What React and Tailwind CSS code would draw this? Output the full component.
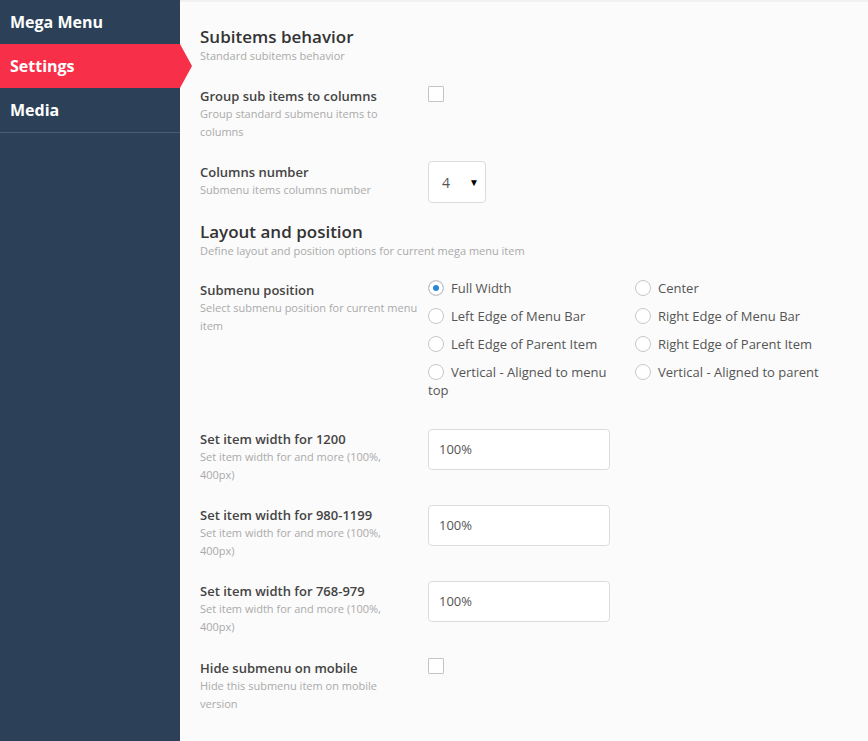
import React from 'react';

const font = { fontFamily: '"Open Sans", "Liberation Sans", sans-serif' };

function Checkbox() {
  return <span className="block w-[16px] h-[16px] bg-white border border-[#c4c4c4] rounded-[1px]" />;
}

function Radio({ label, checked }) {
  return (
    <label className="block text-[13px] leading-[18px] text-[#555]">
      <span
        className={
          'inline-block align-[-3px] w-[16px] h-[16px] mr-[7px] rounded-full border ' +
          (checked
            ? 'border-[#d9c8c0] bg-[#2f86d4] shadow-[inset_0_0_0_4px_#fff]'
            : 'border-[#c8c8c8] bg-white')
        }
      />
      {label}
    </label>
  );
}

function Label({ title, desc, className = 'w-[218px]' }) {
  return (
    <div className={'shrink-0 ' + className}>
      <div className="text-[13px] leading-[18px] font-semibold text-[#444]">{title}</div>
      <div className="text-[11px] leading-[18px] text-[#aaa]">{desc}</div>
    </div>
  );
}

function WidthInput() {
  return (
    <div className="w-[182px] h-[41px] bg-white border border-[#dcdcdc] rounded-[4px] px-[10px] flex items-center text-[13px] text-[#555]">
      100%
    </div>
  );
}

export default function App() {
  return (
    <div className="h-screen flex bg-[#fbfbfb]" style={font}>
      {/* Sidebar */}
      <div className="w-[180px] shrink-0 bg-[#2c4158]">
        <div className="h-[44px] flex items-center pl-[10px] text-white font-bold text-[16px]">Mega Menu</div>
        <div className="relative h-[44px] flex items-center pl-[10px] text-white font-bold text-[16px] bg-[#f72f49]">
          Settings
          <span className="absolute left-full top-0 w-0 h-0 border-y-[22px] border-y-transparent border-l-[12px] border-l-[#f72f49]" />
        </div>
        <div className="h-[45px] flex items-center pl-[10px] text-white font-bold text-[16px] border-b border-[#4a5e73]">Media</div>
      </div>

      {/* Content */}
      <div className="flex-1 border-t-2 border-[#f1f1f1] pl-[20px] pr-4">
        <div className="mt-[23px] text-[17px] leading-[24px] font-semibold text-[#333]">Subitems behavior</div>
        <div className="text-[11px] leading-[14px] text-[#aaa]">Standard subitems behavior</div>

        <div className="mt-[23px] flex gap-[10px]">
          <Label title="Group sub items to columns" desc="Group standard submenu items to columns" className="w-[218px] mt-px" />
          <Checkbox />
        </div>

        <div className="mt-[20px] flex gap-[10px]">
          <Label title="Columns number" desc="Submenu items columns number" className="w-[218px] mt-[2px]" />
          <div className="w-[58px] h-[42px] bg-white border border-[#dcdcdc] rounded-[4px] flex items-center pl-[13px] pr-[6px] text-[14px] text-[#555]">
            <span className="flex-1">4</span>
            <span className="text-[10px] text-black">▼</span>
          </div>
        </div>

        <div className="mt-[17px] text-[17px] leading-[24px] font-semibold text-[#333]">Layout and position</div>
        <div className="text-[11px] leading-[14px] text-[#aaa]">Define layout and position options for current mega menu item</div>

        <div className="mt-[21px] flex gap-[10px]">
          <Label title="Submenu position" desc="Select submenu position for current menu item" className="w-[218px] mt-[2px]" />
          <div className="grid grid-cols-[207px_200px] gap-y-[10px]">
            <Radio label="Full Width" checked />
            <Radio label="Center" />
            <Radio label="Left Edge of Menu Bar" />
            <Radio label="Right Edge of Menu Bar" />
            <Radio label="Left Edge of Parent Item" />
            <Radio label="Right Edge of Parent Item" />
            <div className="pr-[7px]">
              <Radio label="Vertical - Aligned to menu top" />
            </div>
            <Radio label="Vertical - Aligned to parent" />
          </div>
        </div>

        <div className="mt-[30px] flex gap-[13px]">
          <Label title="Set item width for 1200" desc="Set item width for and more (100%, 400px)" className="w-[215px] mt-px" />
          <WidthInput />
        </div>

        <div className="mt-[21px] flex gap-[13px]">
          <Label title="Set item width for 980-1199" desc="Set item width for and more (100%, 400px)" className="w-[215px] mt-px" />
          <WidthInput />
        </div>

        <div className="mt-[21px] flex gap-[13px]">
          <Label title="Set item width for 768-979" desc="Set item width for and more (100%, 400px)" className="w-[215px] mt-px" />
          <WidthInput />
        </div>

        <div className="mt-[22px] flex gap-[18px]">
          <Label title="Hide submenu on mobile" desc="Hide this submenu item on mobile version" className="w-[210px] mt-px" />
          <Checkbox />
        </div>
      </div>
    </div>
  );
}
